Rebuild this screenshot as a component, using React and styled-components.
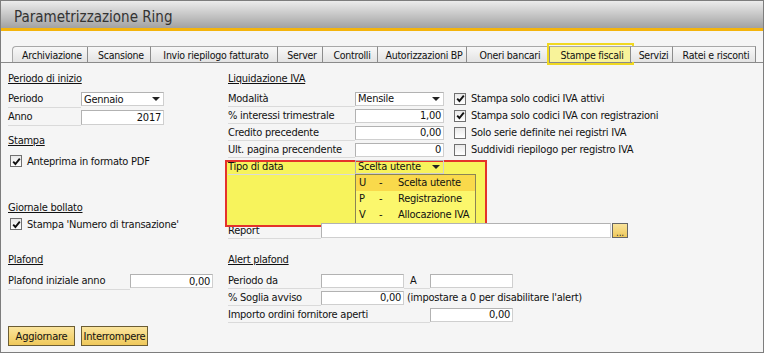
import React from 'react';
import styled, { createGlobalStyle } from 'styled-components';

const GlobalStyle = createGlobalStyle`
    body {
        margin: 0;
        background: #fff;
        font-family: "DejaVu Sans Condensed", "Liberation Sans", sans-serif;
        font-size: 11px;
        letter-spacing: -0.25px;
        color: #111;
    }
`;

const Window = styled.div`
    width: 764px;
    height: 353px;
    box-sizing: border-box;
    border: 1px solid #7d7d7d;
    background: #f5f5f5;
    display: flex;
    flex-direction: column;
`;

const TitleBar = styled.div`
    height: 30px;
    flex-shrink: 0;
    box-sizing: border-box;
    background: linear-gradient(#ececec, #a2a2a2);
    border-bottom: 3px solid #f4b40c;
    padding: 4px 0 0 13px;
    display: flex;
    align-items: center;
    font-size: 15px;
    letter-spacing: 0;
    color: #333;
`;

const TabStrip = styled.div`
    display: flex;
    padding: 15px 0 0 11px;
    border-bottom: 1px solid #8a8a8a;
`;

const Tab = styled.div`
    width: ${p => p.$w}px;
    height: 16px;
    box-sizing: border-box;
    border-top: 1px solid #a8a8a8;
    border-right: 1px solid #8c8c8c;
    border-left: ${p => p.$first ? '1px solid #a8a8a8' : 'none'};
    border-top-left-radius: ${p => p.$first ? '4px' : '0'};
    background: ${p => p.$active ? '#f8f39a' : 'linear-gradient(#f8f8f8, #e3e3e3)'};
    outline: ${p => p.$active ? '2px solid #f0d820' : 'none'};
    outline-offset: 1px;
    display: flex;
    align-items: center;
    justify-content: center;
    padding-left: 4px;
    font-size: 10.5px;
    white-space: nowrap;
`;

const Content = styled.div`
    flex: 1;
    padding: 7px 7px 0;
    display: grid;
    grid-template-columns: 220px 1fr;
    align-content: start;
`;

const Column = styled.div`
    display: flex;
    flex-direction: column;
    margin-top: ${p => p.$mt || 0}px;
`;

const Heading = styled.div`
    height: 17px;
    line-height: 17px;
    text-decoration: underline;
    margin-top: ${p => p.$mt || 0}px;
`;

const Row = styled.div`
    display: flex;
    align-items: center;
    height: ${p => p.$h || 17}px;
    margin-top: ${p => p.$mt || 0}px;
`;

const TipoRow = styled(Row)`
    position: relative;
    z-index: 0;
`;

const Highlight = styled.div`
    position: absolute;
    left: -3px;
    top: 2px;
    width: 262px;
    height: 67px;
    box-sizing: border-box;
    border: 2px solid #e4322b;
    background: #f7f35c;
    z-index: -1;
`;

const Label = styled.div`
    width: ${p => p.$w}px;
    height: 100%;
    flex-shrink: 0;
    box-sizing: border-box;
    border-bottom: 1px solid #dadada;
    padding-left: ${p => p.$pl || 0}px;
    display: flex;
    align-items: center;
    white-space: nowrap;
`;

const Field = styled.div`
    position: relative;
    width: ${p => p.$w}px;
    height: ${p => p.$h || 14}px;
    flex-shrink: 0;
    box-sizing: border-box;
    border: 1px solid #b2b2b2;
    border-bottom-color: #cfcfcf;
    border-right-color: #cfcfcf;
    background: ${p => p.$bg || '#fff'};
    padding: 0 2px;
    display: flex;
    align-items: center;
    justify-content: ${p => p.$right ? 'flex-end' : 'flex-start'};
    white-space: nowrap;
`;

const Arrow = styled.span`
    margin-left: auto;
    margin-right: 1px;
    border-left: 4px solid transparent;
    border-right: 4px solid transparent;
    border-top: 4px solid #222;
`;

const DropList = styled.div`
    position: absolute;
    left: -1px;
    top: 100%;
    margin-top: 1px;
    width: 121px;
    box-sizing: border-box;
    border: 1px solid #8b8455;
    background: #fbf76c;
`;

const DropItem = styled.div`
    height: 16px;
    display: grid;
    grid-template-columns: 20px 19px 1fr;
    align-items: center;
    padding-left: 3px;
    background: ${p => p.$active ? '#f9d94b' : 'transparent'};
`;

const CheckItem = styled.div`
    display: flex;
    align-items: center;
    gap: 5px;
    margin-left: ${p => p.$ml || 0}px;
    white-space: nowrap;
`;

const Box = styled.span`
    width: 12px;
    height: 12px;
    box-sizing: border-box;
    border: 1px solid #707070;
    background: linear-gradient(#e9e9e9, #fff);
    display: inline-flex;
    align-items: center;
    justify-content: center;
`;

const DotsButton = styled.div`
    width: 16px;
    height: 15px;
    margin-left: 1px;
    box-sizing: border-box;
    border: 1px solid #666;
    background: linear-gradient(#f9e39a, #efc95c);
    display: flex;
    align-items: flex-end;
    justify-content: center;
    line-height: 9px;
    font-size: 10px;
    color: #333;
`;

const Note = styled.span`
    margin-left: 3px;
    white-space: nowrap;
`;

const ButtonBar = styled.div`
    grid-column: 1 / -1;
    display: flex;
    gap: 6px;
    margin-top: 3px;
`;

const Button = styled.div`
    width: 67px;
    height: 20px;
    box-sizing: border-box;
    border: 1px solid #6b5d34;
    background: linear-gradient(#fbe59e, #efc85a);
    display: flex;
    align-items: center;
    justify-content: center;
    white-space: nowrap;
`;

const tabs = [
    ['Archiviazione', 76],
    ['Scansione', 63],
    ['Invio riepilogo fatturato', 127],
    ['Server', 45],
    ['Controlli', 55],
    ['Autorizzazioni BP', 89],
    ['Oneri bancari', 83],
    ['Stampe fiscali', 81],
    ['Servizi', 42],
    ['Ratei e risconti', 83]
];

const Check = ({checked, children, ml}) => (
    <CheckItem $ml={ml}>
        <Box>
            {checked &&
                <svg width="9" height="9" viewBox="0 0 9 9">
                    <path d="M1.2 4.6 L3.4 7 L7.8 1.6" fill="none" stroke="#111" strokeWidth="1.9"/>
                </svg>}
        </Box>
        {children}
    </CheckItem>
);

const Select = ({w, value, bg, children}) => (
    <Field $w={w} $bg={bg}>
        {value}
        <Arrow/>
        {children}
    </Field>
);

const liquidazione = [
    ['Modalità', null, 'Stampa solo codici IVA attivi', true],
    ['% interessi trimestrale', '1,00', 'Stampa solo codici IVA con registrazioni', true],
    ['Credito precedente', '0,00', 'Solo serie definite nei registri IVA', false],
    ['Ult. pagina precendente', '0', 'Suddividi riepilogo per registro IVA', false]
];

export default function App() {
    return (
        <>
            <GlobalStyle/>
            <Window>
                <TitleBar>Parametrizzazione Ring</TitleBar>
                <TabStrip>
                    {tabs.map(([name, w], i) => (
                        <Tab key={name} $w={w} $first={i === 0} $active={name === 'Stampe fiscali'}>
                            {name}
                        </Tab>
                    ))}
                </TabStrip>
                <Content>
                    <Column>
                        <Heading>Periodo di inizio</Heading>
                        <Row $h={18} $mt={3}>
                            <Label $w={73}>Periodo</Label>
                            <Select w={83} value="Gennaio"/>
                        </Row>
                        <Row $h={18}>
                            <Label $w={73}>Anno</Label>
                            <Field $w={83} $h={15} $right>2017</Field>
                        </Row>
                        <Heading $mt={6}>Stampa</Heading>
                        <Row $h={16} $mt={4}>
                            <Check checked ml={2}>Anteprima in formato PDF</Check>
                        </Row>
                        <Heading $mt={30}>Giornale bollato</Heading>
                        <Row $h={16}>
                            <Check checked ml={2}>Stampa 'Numero di transazione'</Check>
                        </Row>
                    </Column>

                    <Column>
                        <Heading>Liquidazione IVA</Heading>
                        {liquidazione.map(([label, value, check, checked], i) => (
                            <Row key={label} $mt={i === 0 ? 3 : 0}>
                                <Label $w={127}>{label}</Label>
                                {value === null
                                    ? <Select w={89} value="Mensile"/>
                                    : <Field $w={89} $right>{value}</Field>}
                                <Check checked={checked} ml={10}>{check}</Check>
                            </Row>
                        ))}
                        <TipoRow>
                            <Highlight/>
                            <Label $w={127}>Tipo di data</Label>
                            <Select w={89} value="Scelta utente" bg="transparent">
                                <DropList>
                                    <DropItem $active><span>U</span><span>-</span><span>Scelta utente</span></DropItem>
                                    <DropItem><span>P</span><span>-</span><span>Registrazione</span></DropItem>
                                    <DropItem><span>V</span><span>-</span><span>Allocazione IVA</span></DropItem>
                                </DropList>
                            </Select>
                        </TipoRow>
                        <Row $mt={47}>
                            <Label $w={93}>Report</Label>
                            <Field $w={290} $h={15}/>
                            <DotsButton>...</DotsButton>
                        </Row>
                    </Column>

                    <Column $mt={12}>
                        <Heading>Plafond</Heading>
                        <Row $h={18} $mt={4}>
                            <Label $w={122}>Plafond iniziale anno</Label>
                            <Field $w={83} $right>0,00</Field>
                        </Row>
                    </Column>

                    <Column $mt={12}>
                        <Heading>Alert plafond</Heading>
                        <Row $mt={4}>
                            <Label $w={93}>Periodo da</Label>
                            <Field $w={83}/>
                            <Label $w={26} $pl={6}>A</Label>
                            <Field $w={83}/>
                        </Row>
                        <Row>
                            <Label $w={93}>% Soglia avviso</Label>
                            <Field $w={83} $right>0,00</Field>
                            <Note>(impostare a 0 per disabilitare l'alert)</Note>
                        </Row>
                        <Row>
                            <Label $w={202}>Importo ordini fornitore aperti</Label>
                            <Field $w={83} $right>0,00</Field>
                        </Row>
                    </Column>

                    <ButtonBar>
                        <Button>Aggiornare</Button>
                        <Button>Interrompere</Button>
                    </ButtonBar>
                </Content>
            </Window>
        </>
    );
}
